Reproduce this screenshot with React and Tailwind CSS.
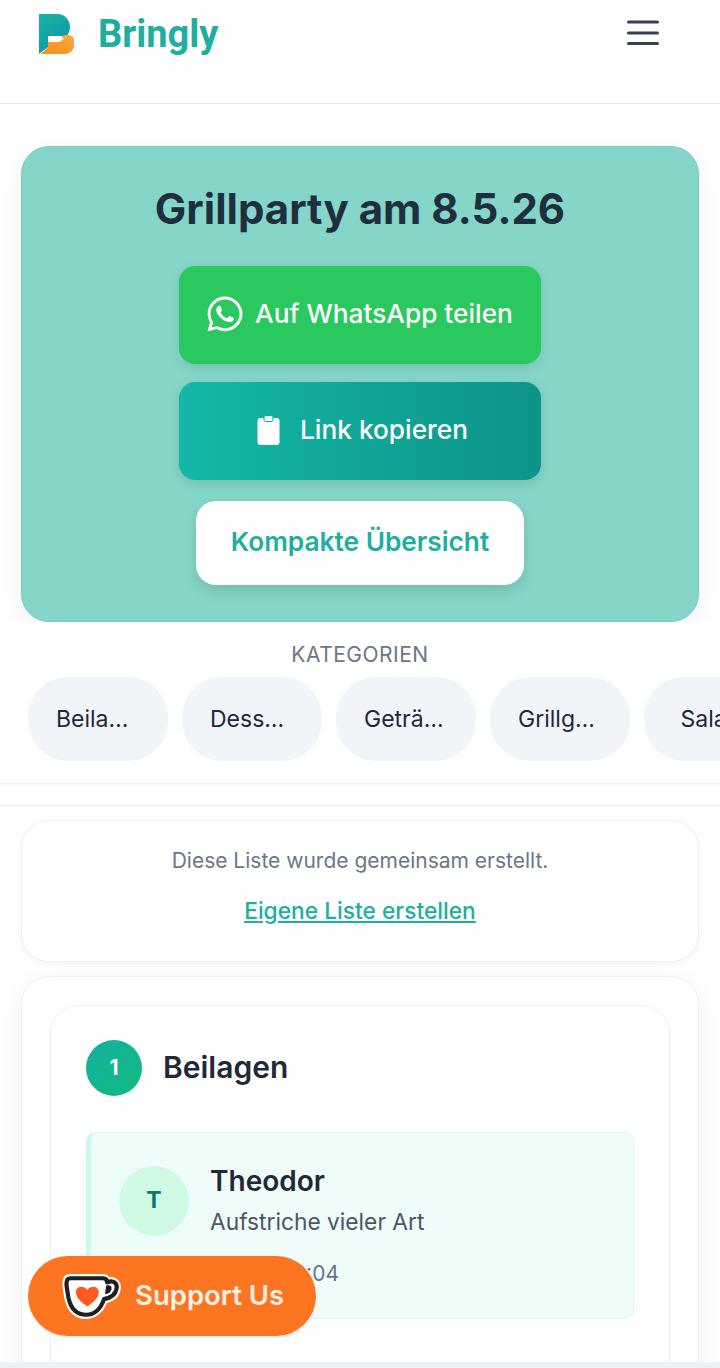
import React from "react";
import { FaWhatsapp } from "react-icons/fa";

function Logo() {
  return (
    <svg width="36" height="42" viewBox="0 0 36 42" className="shrink-0">
      <defs>
        <linearGradient id="lg1" x1="0" y1="0" x2="0.6" y2="1">
          <stop offset="0" stopColor="#1ab3a5" />
          <stop offset="1" stopColor="#0e97a6" />
        </linearGradient>
        <linearGradient id="lg2" x1="0" y1="1" x2="1" y2="0">
          <stop offset="0" stopColor="#f58a20" />
          <stop offset="1" stopColor="#fbac3c" />
        </linearGradient>
      </defs>
      <path d="M0 1H18C26 1 31 7 31 14C31 17 30 20 28 23H9V34L0 41Z" fill="url(#lg1)" />
      <path d="M2 41L9 34V29H20L25 26L22 23L27 22C33 22 35 24 35 27V32C35 37 31 41 26 41Z" fill="url(#lg2)" />
    </svg>
  );
}

function Cup() {
  const d = "M9 6H40C43 6 44 8 44 10C50 7 54 11 53 16C52 22 47 25 41 26C38 35 32 41 24 41C14 41 9 34 7 25C6 19 5 14 5 11C5 8 6 6 9 6Z";
  return (
    <svg width="61" height="48" viewBox="0 0 58 46" className="shrink-0">
      <path d={d} fill="#ffffff" stroke="#ffffff" strokeWidth="8" strokeLinejoin="round" />
      <path d={d} fill="#ffffff" stroke="#1f1f1f" strokeWidth="4" strokeLinejoin="round" />
      <path d="M43 13C47 12 49 14 48 17C47 20 45 21 42 21Z" fill="#1f1f1f" />
      <path d="M25 33C19 29 14 25 14 19C14 14 21 12 25 17C29 12 36 14 36 19C36 25 31 29 25 33Z" fill="#ff5a1f" />
    </svg>
  );
}

function Clip() {
  return (
    <svg width="23" height="30" viewBox="0 0 23 30" className="ml-[5px] shrink-0">
      <rect x="0.5" y="3" width="22" height="27" rx="3" fill="#ffffff" />
      <rect x="7" y="0.5" width="9" height="6" rx="1.5" fill="#ffffff" stroke="#14a899" strokeWidth="1" />
    </svg>
  );
}

function Chip({ label }) {
  return (
    <div className="flex h-[84px] w-[140px] shrink-0 items-center rounded-[40px] bg-[#f1f4f9] px-7 text-[23px] text-[#1f2937]">
      <span className="block w-full truncate text-center">{label}</span>
    </div>
  );
}

export default function App() {
  return (
    <div className="relative h-[1368px] w-[720px] overflow-hidden bg-white font-['Inter',sans-serif]">
      <header className="flex h-[104px] items-start justify-between border-b border-[#e5e7eb] pl-[39px] pr-[61px] pt-[12px]">
        <div className="flex items-center gap-[23px]">
          <Logo />
          <span className="pt-[1px] font-['Roboto',sans-serif] text-[38px] font-bold leading-[42px] text-[#20ae9f]">Bringly</span>
        </div>
        <svg width="32" height="26" viewBox="0 0 32 26" className="mt-[8px]">
          <rect x="0" y="0.5" width="32" height="3" rx="1.5" fill="#374151" />
          <rect x="0" y="11.5" width="32" height="3" rx="1.5" fill="#374151" />
          <rect x="0" y="22" width="32" height="3" rx="1.5" fill="#374151" />
        </svg>
      </header>

      <main className="px-[21px] pt-[42px]">
        <section className="flex h-[476px] flex-col items-center rounded-[28px] border border-[#76cdbf] bg-[#85d5c9] pt-[34px] shadow-[0_8px_24px_rgba(0,0,0,0.06)]">
          <h1 className="text-[42px] font-bold leading-[56px] text-[#1e2f3e]">Grillparty am 8.5.26</h1>
          <a className="mt-[29px] flex h-[98px] w-[362px] items-center justify-center gap-[10px] rounded-[16px] bg-[#29c95f] pb-[2px] pr-[2px] text-[26.25px] font-medium text-white shadow-[0_4px_12px_rgba(0,0,0,0.1)]">
            <FaWhatsapp className="h-[40px] w-[40px]" />
            Auf WhatsApp teilen
          </a>
          <a className="mt-[18px] flex h-[98px] w-[362px] items-center justify-center gap-[20px] rounded-[16px] bg-gradient-to-r from-[#14b8a6] to-[#0d9488] pb-[2px] text-[26.25px] font-medium text-white shadow-[0_4px_12px_rgba(0,0,0,0.12)]">
            <Clip />
            Link kopieren
          </a>
          <a className="mt-[21px] flex h-[84px] w-[328px] items-center justify-center rounded-[20px] bg-white pb-[2px] text-[26.25px] font-semibold text-[#20ae9f] shadow-[0_6px_14px_rgba(0,0,0,0.12)]">
            Kompakte Übersicht
          </a>
        </section>
      </main>

      <section className="relative h-[162px] border-b border-[#eeeff2] bg-white pt-[19px] shadow-[0_1px_3px_rgba(0,0,0,0.04)]">
        <div className="text-center text-[21px] leading-[28px] tracking-[0.5px] text-[#6b7785]">KATEGORIEN</div>
        <div className="mt-[8px] flex gap-[14px] pl-[28px]">
          <Chip label="Beilagen" />
          <Chip label="Desserts" />
          <Chip label="Getränke" />
          <Chip label="Grillgerichte" />
          <Chip label="Salate" />
        </div>
      </section>

      <div className="mt-[21px] border-t border-[#eeeff2] px-[21px] pt-[14px]">
        <section className="flex h-[142px] flex-col items-center rounded-[28px] border border-[#eef0f3] bg-white pt-[24px] shadow-[0_2px_6px_rgba(0,0,0,0.05)]">
          <p className="text-[21px] leading-[32px] text-[#6b7785]">Diese Liste wurde gemeinsam erstellt.</p>
          <a className="mt-[18px] text-[22.75px] font-medium leading-[32px] text-[#20ae9f] underline">Eigene Liste erstellen</a>
        </section>

        <section className="mt-[14px] h-[500px] rounded-[28px] border border-[#eef0f3] bg-white px-[28px] pt-[28px] shadow-[0_6px_24px_rgba(0,0,0,0.06)]">
          <div className="h-[400px] rounded-[28px] border border-[#eef0f3] bg-white px-[35px] pt-[34px]">
            <div className="flex items-center gap-[21px]">
              <div className="flex h-[56px] w-[56px] items-center justify-center rounded-full bg-gradient-to-br from-[#14b1a1] to-[#14b97f] text-[21px] font-bold text-white">1</div>
              <h2 className="pb-[2px] text-[30px] font-semibold leading-[40px] text-[#1f2937]">Beilagen</h2>
            </div>
            <div className="mt-[36px] flex h-[187px] gap-[21px] rounded-[10px] border border-[#dcf7f2] border-l-[5px] border-l-[#ccf6ee] bg-[#effdfa] pl-[28px] pt-[33px]">
              <div className="flex h-[70px] w-[70px] shrink-0 items-center justify-center rounded-full bg-[#d1fae5] pb-[2px] text-[23px] font-bold text-[#0f766e]">T</div>
              <div>
                <div className="text-[28px] font-semibold leading-[30px] text-[#1f2937]">Theodor</div>
                <div className="mt-[11px] text-[22.75px] leading-[30px] text-[#4b5563]">Aufstriche vieler Art</div>
                <div className="mt-[22px] text-[21px] leading-[30px] text-[#64748b]">08.05., 12:04</div>
              </div>
            </div>
          </div>
        </section>
      </div>

      <a className="absolute left-[28px] top-[1256px] flex h-[80px] w-[288px] items-center gap-[13px] rounded-full bg-[#fd7520] pl-[33px] text-[27.5px] font-semibold text-[#fff1e4] shadow-[0_1px_3px_rgba(0,0,0,0.1)]">
        <Cup />
        Support Us
      </a>
      <div className="absolute bottom-0 left-0 h-[6px] w-[720px] bg-[#edf2f7]" />
    </div>
  );
}
